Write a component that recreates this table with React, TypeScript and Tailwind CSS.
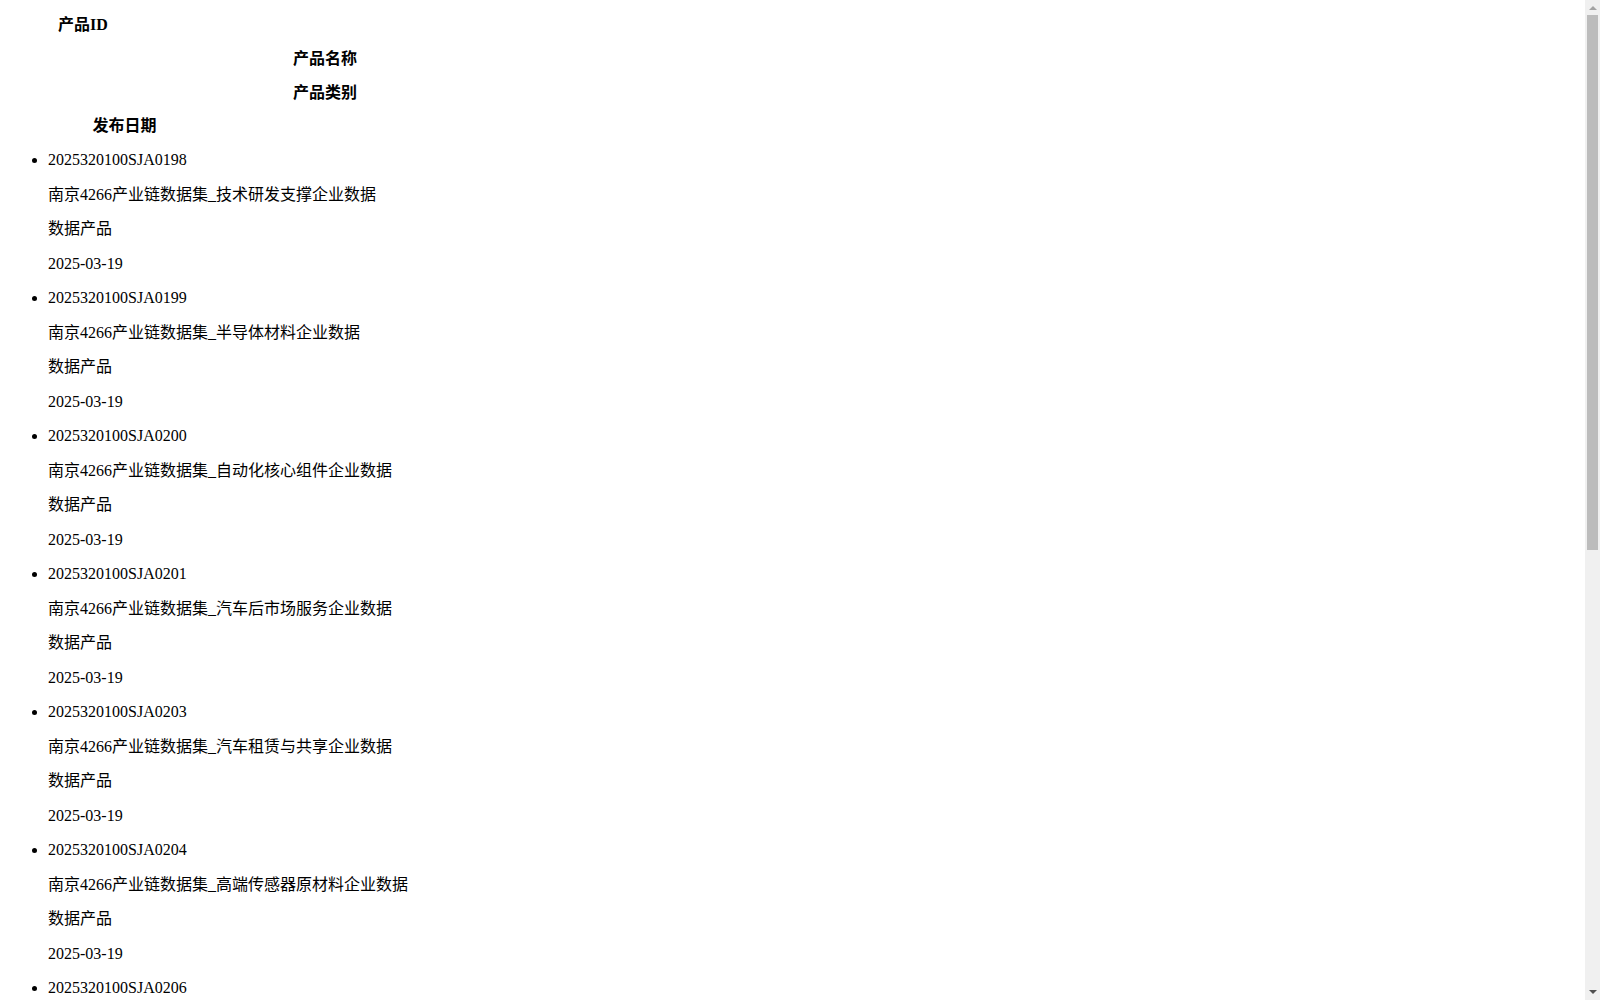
const headers = [
  { label: '产品ID', width: 'w-[150px]' },
  { label: '产品名称', width: 'w-[634px]' },
  { label: '产品类别', width: 'w-[634px]' },
  { label: '发布日期', width: 'w-[233px]' },
];

const products = [
  { id: '2025320100SJA0198', name: '南京4266产业链数据集_技术研发支撑企业数据' },
  { id: '2025320100SJA0199', name: '南京4266产业链数据集_半导体材料企业数据' },
  { id: '2025320100SJA0200', name: '南京4266产业链数据集_自动化核心组件企业数据' },
  { id: '2025320100SJA0201', name: '南京4266产业链数据集_汽车后市场服务企业数据' },
  { id: '2025320100SJA0203', name: '南京4266产业链数据集_汽车租赁与共享企业数据' },
  { id: '2025320100SJA0204', name: '南京4266产业链数据集_高端传感器原材料企业数据' },
  { id: '2025320100SJA0206', name: '南京4266产业链数据集_智能网联汽车企业数据' },
  { id: '2025320100SJA0207', name: '南京4266产业链数据集_新能源电池企业数据' },
  { id: '2025320100SJA0208', name: '南京4266产业链数据集_工业软件企业数据' },
  { id: '2025320100SJA0209', name: '南京4266产业链数据集_集成电路设计企业数据' },
  { id: '2025320100SJA0210', name: '南京4266产业链数据集_生物医药研发企业数据' },
  { id: '2025320100SJA0211', name: '南京4266产业链数据集_智能制造装备企业数据' },
];

const line = 'leading-[18.5px] mb-4';

export default function App() {
  return (
    <div className="flex h-screen overflow-hidden bg-white">
      <div
        className="flex-1 text-black text-base leading-[18.5px] px-2 pt-4"
        style={{ fontFamily: '"Liberation Serif", "Noto Sans CJK SC", serif' }}
      >
        {headers.map((h) => (
          <div key={h.label} className={`${h.width} leading-[17.8px] mb-4 text-center font-bold`}>
            {h.label}
          </div>
        ))}
        <ul className="list-disc pl-10 mt-[1.5px]">
          {products.map((p) => (
            <li key={p.id}>
              <div className={line}>{p.id}</div>
              <div className={line}>{p.name}</div>
              <div className={line}>数据产品</div>
              <div className={line}>2025-03-19</div>
            </li>
          ))}
        </ul>
      </div>

      {/* page scrollbar */}
      <div className="flex w-[15px] shrink-0 flex-col items-center bg-[#f0f0f0] pt-[6px] pb-[6px]">
        <div className="h-0 w-0 border-x-[4px] border-b-[4px] border-x-transparent border-b-[#a3a3a3]" />
        <div className="mt-[5px] h-[535px] w-[11px] bg-[#bcbcbc]" />
        <div className="flex-1" />
        <div className="h-0 w-0 border-x-[4px] border-t-[4px] border-x-transparent border-t-[#505050]" />
      </div>
    </div>
  );
}
